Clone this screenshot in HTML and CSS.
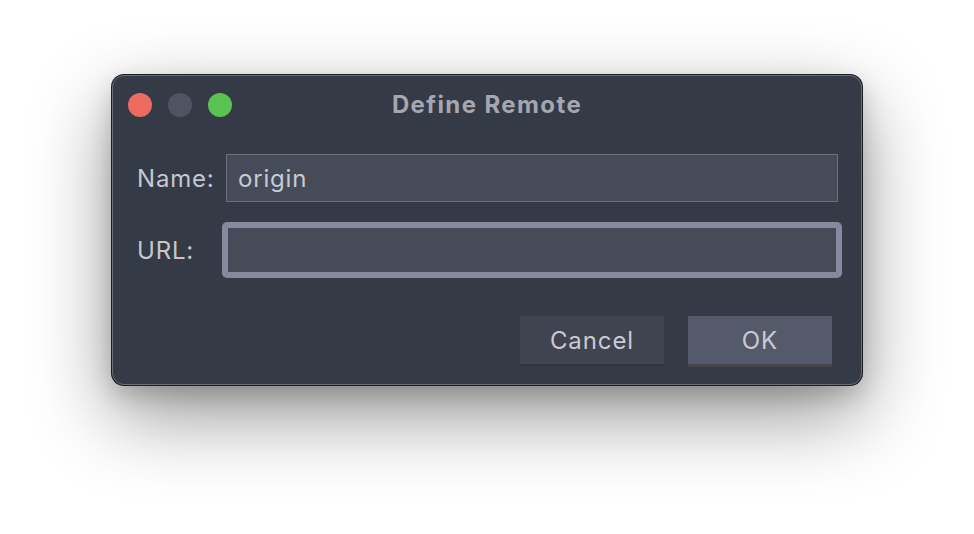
FILE: index.html
```html
<!DOCTYPE html>
<html>
<head>
<meta charset="utf-8">
<link rel="stylesheet" href="styles.css">
</head>
<body>
<div class="window">
  <div class="titlebar">
    <div class="lights">
      <span class="light red"></span>
      <span class="light gray"></span>
      <span class="light green"></span>
    </div>
    <div class="title">Define Remote</div>
  </div>
  <div class="form">
    <div class="row">
      <label class="label">Name:</label>
      <div class="field">origin</div>
    </div>
    <div class="row">
      <label class="label">URL:</label>
      <div class="field focus"></div>
    </div>
  </div>
  <div class="buttons">
    <div class="btn cancel">Cancel</div>
    <div class="btn ok">OK</div>
  </div>
</div>
</body>
</html>
```
FILE: styles.css
```css
html, body {
  margin: 0;
  padding: 0;
  background: #ffffff;
}
body {
  width: 974px;
  height: 534px;
  overflow: hidden;
  font-family: "Inter", "Liberation Sans", sans-serif;
  display: flex;
  justify-content: center;
  align-items: flex-start;
  padding-top: 75px;
  box-sizing: border-box;
}
.window {
  width: 750px;
  height: 310px;
  box-sizing: border-box;
  background: #353a47;
  border-radius: 12px;
  border: 1px solid #6a6e79;
  box-shadow: 0 0 0 1px #1c1d21, 0 30px 80px rgba(0,0,0,0.42), 0 10px 24px rgba(0,0,0,0.18);
  display: flex;
  flex-direction: column;
}
.titlebar {
  height: 55px;
  display: flex;
  align-items: center;
  position: relative;
  padding-left: 15px;
  padding-top: 1px;
}
.lights {
  display: flex;
  gap: 16px;
}
.light {
  width: 24px;
  height: 24px;
  border-radius: 50%;
}
.red { background: #ed6a5e; }
.gray { background: #4e5462; }
.green { background: #5ac250; }
.title {
  position: absolute;
  left: 0;
  right: 0;
  text-align: center;
  font-weight: 700;
  font-size: 24px;
  letter-spacing: 1.4px;
  color: #a4a7b0;
  pointer-events: none;
}
.form {
  display: flex;
  flex-direction: column;
  gap: 24px;
  padding: 22px 23px 0 24px;
}
.row {
  display: flex;
  align-items: center;
}
.label {
  width: 89px;
  font-size: 24px;
  letter-spacing: 0.8px;
  color: #c5c7cd;
  padding-top: 1px;
}
.field {
  flex: 1;
  height: 48px;
  box-sizing: border-box;
  background: #464b5a;
  border: 1px solid #6c707c;
  color: #c8cad0;
  font-size: 24px;
  letter-spacing: 0.8px;
  display: flex;
  align-items: center;
  padding-left: 11px;
  padding-top: 1px;
}
.field.focus {
  border: 2px solid #858a9f;
  outline: 4px solid #858a9f;
  border-radius: 1px;
}
.buttons {
  display: flex;
  justify-content: flex-end;
  gap: 24px;
  padding: 42px 29px 0 0;
}
.btn {
  width: 144px;
  height: 48px;
  display: flex;
  align-items: center;
  justify-content: center;
  font-size: 24px;
  letter-spacing: 0.9px;
  color: #c9cbd1;
  padding-top: 1px;
  box-sizing: border-box;
}
.cancel {
  background: #3f4450;
  box-shadow: 0 2px 0 #30333b;
}
.ok {
  background: #555a6a;
  box-shadow: 0 3px 0 #45464c;
}
```
